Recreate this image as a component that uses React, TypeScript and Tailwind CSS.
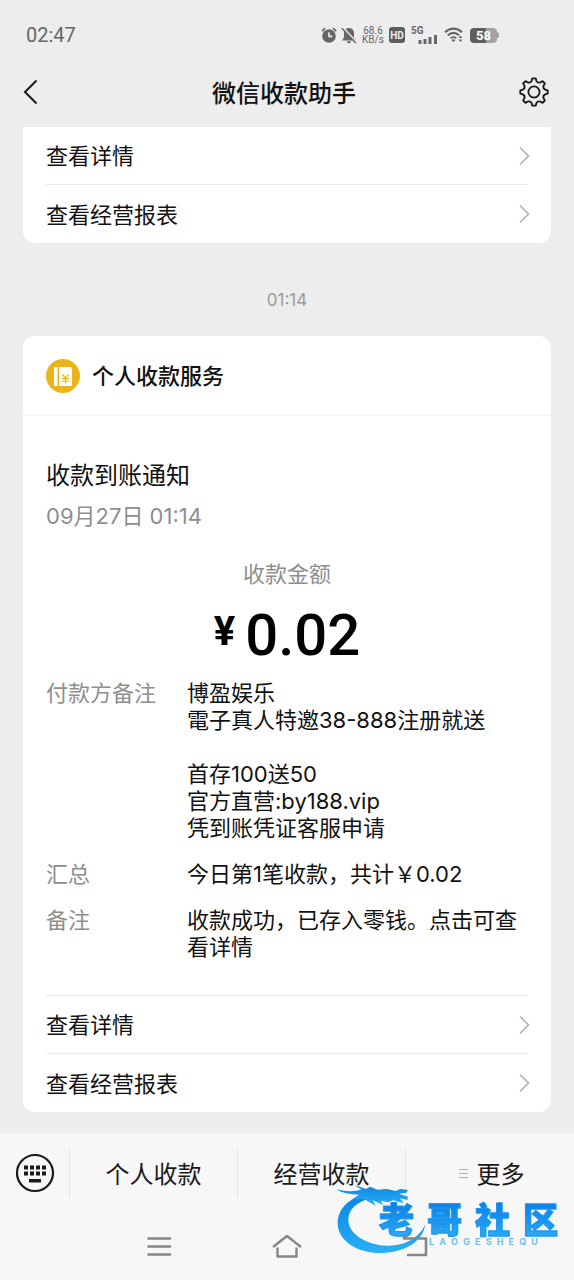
const links = ['查看详情', '查看经营报表'];

const remarkLines = ['博盈娱乐', '電子真人特邀38-888注册就送', '', '首存100送50', '官方直营:by188.vip', '凭到账凭证客服申请'];

function gearPath(cx: number, cy: number) {
  const at = (r: number, deg: number) => {
    const a = ((deg - 90) * Math.PI) / 180;
    return `${(cx + r * Math.cos(a)).toFixed(2)} ${(cy + r * Math.sin(a)).toFixed(2)}`;
  };
  let d = `M${at(13.8, -7)}`;
  for (let i = 0; i < 8; i++) {
    const t = i * 45;
    d += ` L${at(13.8, t + 7)} L${at(11.4, t + 12)} Q${at(9.4, t + 22.5)} ${at(11.4, t + 33)} L${at(13.8, t + 38)}`;
  }
  return `${d}Z`;
}

function StatusBar() {
  return (
    <div className="flex h-[70px] items-center justify-between pl-[26px] pr-[75px] font-[Roboto,sans-serif] text-[#666]">
      <span className="text-[20px]">02:47</span>
      <div className="flex items-center">
        <svg width="16" height="17" viewBox="0 0 16 17" fill="none" stroke="currentColor">
          <circle cx="8" cy="9" r="6.8" fill="currentColor" stroke="none" />
          <path d="M0.8 4.2 4 1.2M15.2 4.2 12 1.2" strokeWidth="1.6" />
          <path d="M8 5.2v4.2h3.2" stroke="#ededed" strokeWidth="1.6" />
        </svg>
        <svg className="ml-1" width="16" height="17" viewBox="0 0 16 17">
          <path d="M8 1c3.3 0 5 2.4 5 5.2v4.3l1.5 2v1h-13v-1l1.5-2V6.2C3 3.4 4.7 1 8 1ZM6 14.2h4a2 2 0 0 1-4 0Z" fill="currentColor" />
          <path d="M2.2 0.8 15.5 15" stroke="#ededed" strokeWidth="1.6" />
          <path d="M0.8 1.2 14.8 16" stroke="currentColor" strokeWidth="1.4" />
        </svg>
        <div className="ml-[5px] w-[22px] text-center text-[10px] leading-[9px]">
          <div>68.6</div>
          <div>KB/s</div>
        </div>
        <span className="ml-[5px] flex h-4 w-4 items-center justify-center rounded-[3px] bg-[#5e5e5e] text-[10px] font-bold text-[#ededed]">
          HD
        </span>
        <div className="relative ml-[6px] h-[18px] w-[27px]">
          <span className="absolute left-0 top-0 text-[10px] font-bold leading-[9px]">5G</span>
          <svg className="absolute bottom-0 right-0" width="20" height="11" viewBox="0 0 20 11" fill="currentColor">
            <path d="M0.5 7h3v4h-3zM5.5 6h3v5h-3zM10.5 4h3v7h-3zM16 2h3v9h-3z" />
          </svg>
        </div>
        <svg className="ml-[6px]" width="20" height="16" viewBox="0 0 20 16" fill="none" stroke="currentColor">
          <path d="M1 5.2C6.2 0.5 12.8 0.5 18 5.2" strokeWidth="2.2" />
          <path d="M3.8 8.4C7.5 5.2 11.5 5.2 15 8.2" strokeWidth="2.2" />
          <path d="M6.5 11.3C8.5 9.7 10.5 9.7 12.3 11.2" strokeWidth="1.8" />
          <path d="m9.5 15-2-2c1.2-1 2.8-1 4 0Z" fill="currentColor" stroke="none" />
          <path d="m16.5 8.5 2 2.5h-4zM16.5 15l2-2.5h-4z" fill="currentColor" stroke="none" />
        </svg>
        <div className="ml-[6px] flex items-center">
          <span className="flex h-[15px] w-[27px] items-center justify-center rounded-[4px] bg-linear-to-r from-[#5f5f5f] from-60% to-[#a3a3a3] to-60% text-[13px] font-bold text-white">
            58
          </span>
          <span className="h-[6px] w-[2px] rounded-r-sm bg-[#a3a3a3]" />
        </div>
      </div>
    </div>
  );
}

function Header() {
  return (
    <header className="bg-[#ededed] pb-[13px]">
      <StatusBar />
      <div className="flex h-11 items-center justify-between pl-[22px] pr-6">
        <button type="button" aria-label="返回" className="flex w-8">
          <svg width="18" height="26" viewBox="0 0 18 26" fill="none" stroke="#191919" strokeWidth="2">
            <path d="M14.5 1.5 3 13l11.5 11.5" />
          </svg>
        </button>
        <h1 className="pt-[2px] text-[24px] font-medium text-[#111]">微信收款助手</h1>
        <button type="button" aria-label="设置" className="flex w-9 justify-end">
          <svg width="32" height="32" viewBox="0 0 32 32" fill="none" stroke="#191919" strokeWidth="1.8" strokeLinejoin="round">
            <path d={gearPath(16, 16)} />
            <circle cx="16" cy="16" r="5.6" />
          </svg>
        </button>
      </div>
    </header>
  );
}

function LinkRows() {
  return (
    <div className="divide-y divide-[#ebebeb]">
      {links.map((label) => (
        <a key={label} href="#" className="flex h-[58px] items-center justify-between">
          <span className="pt-[2px]">{label}</span>
          <svg className="-mr-[2px]" width="12" height="20" viewBox="0 0 12 20" fill="none" stroke="#b2b2b2" strokeWidth="1.7">
            <path d="m2 1.5 8.500 8.500L2 18.500" />
          </svg>
        </a>
      ))}
    </div>
  );
}

function LedgerIcon() {
  return (
    <svg width="34" height="34" viewBox="0 0 34 34">
      <circle cx="17" cy="17" r="17" fill="#ebb41b" />
      <path d="M9 8h2.500v19H9a1 1 0 0 1-1-1V9a1 1 0 0 1 1-1ZM13 8h12a1 1 0 0 1 1 1v17a1 1 0 0 1-1 1H13Z" fill="#fff" />
      <path d="m16.500 15.500 3 3.500 3-3.500M16 19.500h7M16 22h7M19.500 19v5.500" fill="none" stroke="#ebb41b" strokeWidth="1.200" />
    </svg>
  );
}

function Watermark() {
  return (
    <div className="pointer-events-none absolute right-4 top-[50px] flex items-start">
      <svg width="92" height="72" viewBox="45 160 276 216" className="-mr-[48px]">
        <defs>
          <linearGradient id="dragon" x1="0" y1="0" x2="0" y2="1">
            <stop offset="0" stopColor="#0a84e0" />
            <stop offset="1" stopColor="#29b0f8" />
          </linearGradient>
        </defs>
        <g fill="url(#dragon)">
          <path d="M150 195C95 195 53 235 53 280C53 335 115 372 185 370C250 368 308 340 316 283C300 325 250 350 200 348C140 345 86 315 85 270C85 240 110 215 155 205Z" />
          <path d="M50 179C80 187 105 185 125 180L103 166L138 178L150 171L172 180L200 178L228 184L240 178L264 181L258 190L236 192L264 201L262 211L240 206L251 221L220 212L204 218L182 213L190 226L158 212L167 228L132 208L98 208L117 195C90 195 65 190 50 179Z" />
        </g>
      </svg>
      <div className="pt-[20px]">
        <div className="flex gap-[13px] bg-linear-to-b from-[#0a7fe6] to-[#2aaaf7] bg-clip-text text-[35px] font-black leading-[34px] text-transparent [-webkit-text-stroke:1px_#1a95ee]">
          {'老哥社区'.split('').map((ch) => (
            <span key={ch}>{ch}</span>
          ))}
        </div>
        <div className="ml-[50px] mr-5 flex justify-between text-[9px] font-bold leading-[9px] text-[#74bdf0]">
          {'LAOGESHEQU'.split('').map((ch, i) => (
            <span key={i}>{ch}</span>
          ))}
        </div>
      </div>
    </div>
  );
}

function Footer() {
  return (
    <footer className="relative bg-[#f7f7f7] text-[24px] text-[#191919]">
      <div className="flex h-20 items-center">
        <button type="button" aria-label="键盘" className="flex w-[69px] justify-center">
          <svg width="40" height="40" viewBox="0 0 40 40">
            <circle cx="20" cy="20" r="18" fill="none" stroke="#191919" strokeWidth="2.2" />
            <path
              d="M9 12.500h4v4H9zM15 12.500h4v4h-4zM21 12.500h4v4h-4zM27 12.500h4v4h-4zM9 18.500h4v4H9zM15 18.500h4v4h-4zM21 18.500h4v4h-4zM27 18.500h4v4h-4zM14 26h12v3.500H14z"
              fill="#191919"
            />
          </svg>
        </button>
        <div className="grid h-12 flex-1 grid-cols-3 divide-x divide-[#e2e2e2] border-l border-[#e2e2e2]">
          <button type="button" className="pt-[2px]">个人收款</button>
          <button type="button" className="pt-[2px]">经营收款</button>
          <button type="button" className="flex items-center justify-center gap-[9px] pl-[3px] pt-[2px]">
            <svg width="9" height="10" viewBox="0 0 9 10" stroke="#b0b0b0">
              <path d="M0 .5h9M0 4.500h9M0 8.500h9" />
            </svg>
            更多
          </button>
        </div>
      </div>
      <Watermark />
      <nav className="relative flex h-[67px] items-center justify-center gap-[99px] text-[#868686]">
        <button type="button" aria-label="最近任务">
          <svg width="28" height="26" viewBox="0 0 28 26" fill="none" stroke="currentColor" strokeWidth="2.6">
            <path d="M2.500 4.500h23.500M2.500 12.500h23.500M2.500 20.500h23.500" />
          </svg>
        </button>
        <button type="button" aria-label="主屏幕">
          <svg width="30" height="26" viewBox="0 0 30 26" fill="none" stroke="currentColor" strokeWidth="2.4" strokeLinejoin="round">
            <path d="M1 13 15 2l14 11M5.500 13.500v9h19v-9" />
          </svg>
        </button>
        <button type="button" aria-label="后退">
          <svg width="28" height="26" viewBox="0 0 28 26" fill="none" stroke="currentColor" strokeWidth="2.6" strokeLinejoin="round">
            <path d="M2 4.500h23v16.500H6M6 1.500 2 4.500" />
          </svg>
        </button>
      </nav>
    </footer>
  );
}

export default function App() {
  return (
    <div className="flex min-h-screen flex-col bg-[#ededed] font-['Inter','Noto_Sans_CJK_SC',sans-serif] text-[22px] leading-[27px] text-[#111]">
      <Header />
      <main className="flex-1 px-[23px] pb-[21px]">
        <section className="rounded-b-xl bg-white px-[23px]">
          <LinkRows />
        </section>

        <time className="block pb-[22px] pt-[43px] text-center text-[17px] leading-[28px] text-[#9b9b9b]">01:14</time>

        <section className="rounded-xl bg-white">
          <div className="flex h-20 items-center gap-3 border-b border-[#f5f5f5] px-[23px] font-medium">
            <LedgerIcon />
            <span className="pt-[2px]">个人收款服务</span>
          </div>
          <div className="px-[23px] pt-[46px]">
            <h2 className="text-[24px]">收款到账通知</h2>
            <p className="mt-[14px] text-[#8e8e8e]">09月27日 01:14</p>
            <p className="mt-[31px] text-center text-[#8e8e8e]">收款金额</p>
            <p className="mt-[15px] flex h-[64px] items-start justify-center gap-[10px] font-[Roboto,sans-serif] font-medium text-black">
              <span className="text-[40px] font-bold leading-[58px]">¥</span>
              <span className="text-[58px] leading-[64px]">0.02</span>
            </p>
            <dl className="grid grid-cols-[141px_1fr] gap-y-[19px] pb-[34px] pt-[13px]">
              <dt className="text-[#8e8e8e]">付款方备注</dt>
              <dd>
                {remarkLines.map((line, i) => (
                  <p key={i} className="min-h-[27px]">
                    {line}
                  </p>
                ))}
              </dd>
              <dt className="text-[#8e8e8e]">汇总</dt>
              <dd>今日第1笔收款，共计￥0.02</dd>
              <dt className="text-[#8e8e8e]">备注</dt>
              <dd>收款成功，已存入零钱。点击可查看详情</dd>
            </dl>
            <div className="border-t border-[#ebebeb]">
              <LinkRows />
            </div>
          </div>
        </section>
      </main>
      <Footer />
    </div>
  );
}
